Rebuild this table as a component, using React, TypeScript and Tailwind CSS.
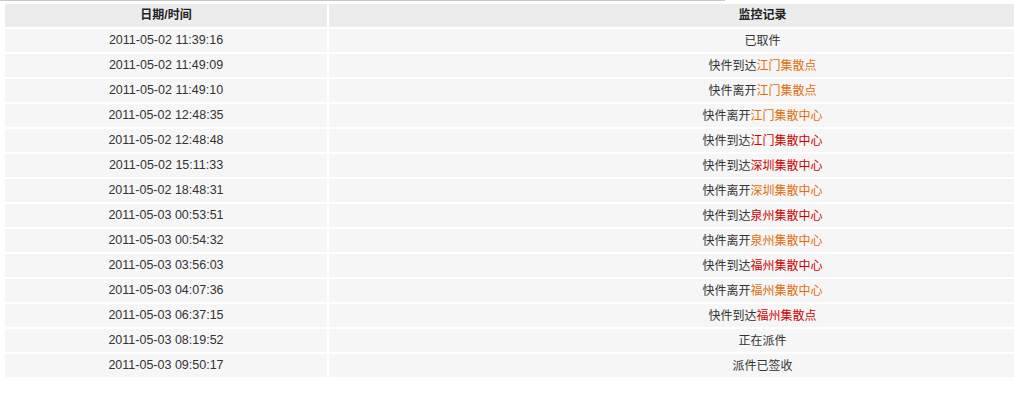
import React from "react";

type Row = { t: string; pre: string; place?: string; c?: "o" | "r" };

const rows: Row[] = [
  { t: "2011-05-02 11:39:16", pre: "已取件" },
  { t: "2011-05-02 11:49:09", pre: "快件到达", place: "江门集散点", c: "o" },
  { t: "2011-05-02 11:49:10", pre: "快件离开", place: "江门集散点", c: "o" },
  { t: "2011-05-02 12:48:35", pre: "快件离开", place: "江门集散中心", c: "o" },
  { t: "2011-05-02 12:48:48", pre: "快件到达", place: "江门集散中心", c: "r" },
  { t: "2011-05-02 15:11:33", pre: "快件到达", place: "深圳集散中心", c: "r" },
  { t: "2011-05-02 18:48:31", pre: "快件离开", place: "深圳集散中心", c: "o" },
  { t: "2011-05-03 00:53:51", pre: "快件到达", place: "泉州集散中心", c: "r" },
  { t: "2011-05-03 00:54:32", pre: "快件离开", place: "泉州集散中心", c: "o" },
  { t: "2011-05-03 03:56:03", pre: "快件到达", place: "福州集散中心", c: "r" },
  { t: "2011-05-03 04:07:36", pre: "快件离开", place: "福州集散中心", c: "o" },
  { t: "2011-05-03 06:37:15", pre: "快件到达", place: "福州集散点", c: "r" },
  { t: "2011-05-03 08:19:52", pre: "正在派件" },
  { t: "2011-05-03 09:50:17", pre: "派件已签收" },
];

export default function App() {
  return (
    <div
      className="w-[1014px] h-[400px] overflow-hidden bg-white text-[12px] text-[#333333]"
      style={{ fontFamily: '"Liberation Sans", Arial, "Noto Sans CJK SC", sans-serif' }}
    >
      <div className="h-px w-[725px] bg-[#c8c8c8]" />
      <table className="ml-[3px] mt-px w-[1195px] border-separate border-spacing-[2px] table-fixed">
        <colgroup>
          <col className="w-[322px]" />
          <col />
        </colgroup>
        <thead>
          <tr>
            <th className="h-[23px] p-0 pb-px bg-[#ececec] font-bold text-[#222] text-center align-middle">日期/时间</th>
            <th className="h-[23px] p-0 pb-px bg-[#ececec] font-bold text-[#222] text-center align-middle">监控记录</th>
          </tr>
        </thead>
        <tbody>
          {rows.map((r, i) => (
            <tr key={i}>
              <td className="h-[23px] p-0 bg-[#f6f6f6] text-center align-middle text-[12.5px]">{r.t}</td>
              <td className="h-[23px] p-0 bg-[#f6f6f6] text-center align-middle">
                {r.pre}
                {r.place && (
                  <span className={r.c === "o" ? "text-[#e46c0a]" : "text-[#d00000]"}>{r.place}</span>
                )}
              </td>
            </tr>
          ))}
        </tbody>
      </table>
    </div>
  );
}
